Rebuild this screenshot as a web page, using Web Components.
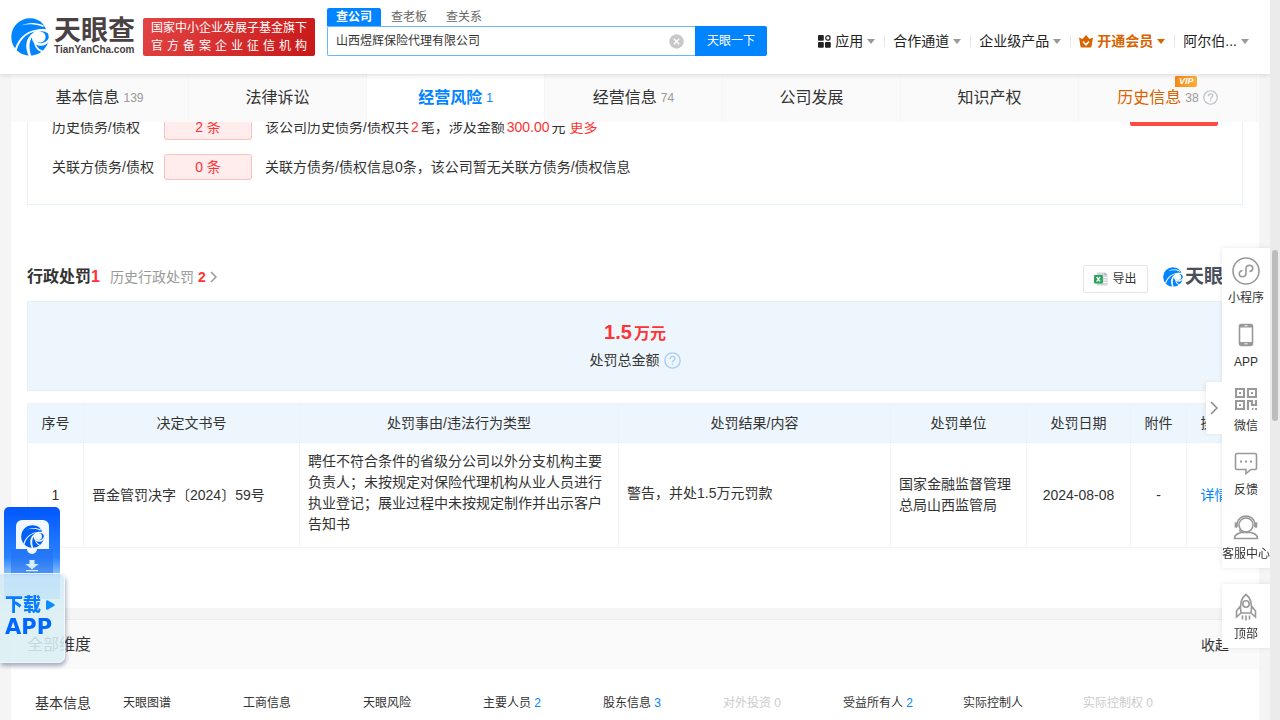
<!DOCTYPE html>
<html lang="zh-CN">
<head>
<meta charset="utf-8">
<title>山西煜辉保险代理有限公司 - 天眼查</title>
<style>
  * { box-sizing: border-box; }
  body {
    margin: 0;
    height: 100vh;
    overflow: hidden;
    padding-right: 10px;
    display: flex;
    flex-direction: column;
    background: #f5f5f5;
    color: #333;
    font-family: "Liberation Sans", "Noto Sans CJK SC", sans-serif;
    font-size: 14px;
    line-height: 20px;
  }
  main { flex: 1; min-height: 0; overflow: hidden; padding: 0 11px; }
  .sheet { background: #fff; padding: 0 16px 60px; }
</style>
</head>
<body>
  <site-header></site-header>
  <tab-nav>
    <tab-item count="139">基本信息</tab-item>
    <tab-item>法律诉讼</tab-item>
    <tab-item count="1" active>经营风险</tab-item>
    <tab-item count="74">经营信息</tab-item>
    <tab-item>公司发展</tab-item>
    <tab-item>知识产权</tab-item>
    <tab-item count="38" vip>历史信息</tab-item>
  </tab-nav>
  <main>
    <div class="sheet">
      <debt-panel></debt-panel>
      <penalty-section></penalty-section>
    </div>
    <dimension-list></dimension-list>
  </main>
  <download-card></download-card>
  <side-tools></side-tools>
  <page-scrollbar></page-scrollbar>

<script>
  class BrandMark extends HTMLElement {
    connectedCallback() {
      this.attachShadow({ mode: 'open' });
      this.shadowRoot.innerHTML = `
        <style>
          :host { display: block; flex: none; width: 38px; height: 38px; color: #0084ff; }
          svg { display: block; width: 100%; height: 100%; }
        </style>
        <svg viewBox="0 0 38 38" aria-hidden="true">
          <circle cx="19" cy="19" r="18.7" fill="currentColor"/>
          <g fill="var(--mark-cut, #fff)">
            <path d="M32 4.500 L38 11 L38 17 C36 13.500 31 12.500 28 14 C23 16 23 22 27 24.500 C31 26.500 36 24 38 20 L38 23 C35 28 29 29 25 26.500 C19 23 20 14 26 12 C29 10.800 33 11 35 11.500 C34 8.500 32.500 6.500 30.500 4.500 Z"/>
            <circle cx="29" cy="19" r="5.600"/>
            <path d="M18 38.500 C12.500 28 15 16 28 12 L25 16 C18 19 17 29 20.500 38.500 Z"/>
            <path d="M4 30.500 C8 19 16 12 30 11 L29 12.500 C18 13.500 10 19 5.500 32.500 Z"/>
            <path d="M10 7.500 C17 4 26 4 33 7.500 L32 9 C25 5.500 17 5.500 10 7.500 Z"/>
            <path d="M23 24.500 C24 30 27 33 31.500 34.500 L33 33 C29 32 26.500 30 25 26 Z"/>
          </g>
        </svg>
      `;
    }
  }
  customElements.define('brand-mark', BrandMark);

  class SearchBox extends HTMLElement {
    connectedCallback() {
      this.attachShadow({ mode: 'open' });
      this.shadowRoot.innerHTML = `
        <style>
          :host { display: block; width: 440px; font-size: 12px; }
          * { box-sizing: border-box; }
          .kinds { display: flex; gap: 1px; }
          .kinds button {
            height: 18px;
            padding: 0 9px;
            border: 0;
            border-radius: 2px 2px 0 0;
            background: none;
            color: #666;
            font: inherit;
            line-height: 18px;
          }
          .kinds .on { background: #0084ff; color: #fff; font-weight: bold; }
          form { display: flex; height: 30px; }
          .field {
            flex: 1;
            display: flex;
            align-items: center;
            padding: 0 11px 0 8px;
            border: 1px solid #6bb7ff;
            border-right: 0;
            border-radius: 2px 0 0 2px;
            background: #fff;
          }
          input { flex: 1; min-width: 0; border: 0; padding: 0; outline: 0; background: none; color: #333; font: inherit; }
          .clear { display: flex; padding: 0; border: 0; background: none; }
          .go {
            width: 72px;
            padding: 0;
            border: 0;
            border-radius: 0 2px 2px 0;
            background: #0084ff;
            color: #fff;
            font: inherit;
          }
        </style>
        <div class="kinds">
          <button class="on">查公司</button>
          <button>查老板</button>
          <button>查关系</button>
        </div>
        <form>
          <div class="field">
            <input type="text" aria-label="公司名称" value="山西煜辉保险代理有限公司">
            <button class="clear" type="button" aria-label="清空">
              <svg width="15" height="15" viewBox="0 0 15 15"><circle cx="7.500" cy="7.500" r="7.200" fill="#c8c8c8"/><path d="M4.800 4.800l5.400 5.400M10.200 4.800l-5.400 5.400" stroke="#fff" stroke-width="1.300"/></svg>
            </button>
          </div>
          <button class="go" type="button">天眼一下</button>
        </form>
      `;
    }
  }
  customElements.define('search-box', SearchBox);

  class NavEntry extends HTMLElement {
    connectedCallback() {
      this.attachShadow({ mode: 'open' });
      this.shadowRoot.innerHTML = `
        <style>
          :host { display: flex; align-items: center; color: #222; --caret: #999; }
          :host([gold]) { color: #d86400; font-weight: bold; --caret: #d86400; }
          :host(:not(:first-child))::before {
            content: '';
            width: 1px;
            height: 12px;
            margin: 0 8px 0 9px;
            background: #e6e6e6;
          }
          a { display: flex; align-items: center; gap: 4px; color: inherit; text-decoration: none; white-space: nowrap; }
          .caret { border: 4px solid transparent; border-top: 5px solid var(--caret); border-bottom: 0; }
        </style>
        <a href="#"><slot name="icon"></slot><span><slot></slot></span><span class="caret"></span></a>
      `;
    }
  }
  customElements.define('nav-entry', NavEntry);

  class SiteHeader extends HTMLElement {
    connectedCallback() {
      this.attachShadow({ mode: 'open' });
      this.shadowRoot.innerHTML = `
        <style>
          :host {
            flex: none;
            display: flex;
            align-items: flex-start;
            height: 74px;
            padding: 8px 21px 0 11px;
            box-sizing: border-box;
            background: #fff;
            box-shadow: 0 1px 5px rgba(0, 0, 0, .14);
            position: relative;
            z-index: 3;
          }
          .logo { display: flex; gap: 5px; margin-top: 10px; color: #4a4143; text-decoration: none; }
          .words { display: flex; flex-direction: column; width: 80px; }
          .name { font-size: 27px; line-height: 26px; font-weight: bold; white-space: nowrap; }
          .domain { font-size: 10px; line-height: 11px; font-weight: bold; }
          .banner {
            width: 172px;
            height: 38px;
            margin: 10px 12px 0 9px;
            padding: 1px 8px;
            box-sizing: border-box;
            border-radius: 2px;
            background: linear-gradient(120deg, #e34444, #c81818);
            color: #fff;
            font-size: 12px;
            line-height: 18px;
            white-space: nowrap;
          }
          .banner div { text-align-last: justify; }
          nav { display: flex; margin: 23px 0 0 auto; }
          svg { display: block; }
        </style>
        <a class="logo" href="#">
          <brand-mark></brand-mark>
          <span class="words">
            <span class="name">天眼查</span>
            <span class="domain">TianYanCha.com</span>
          </span>
        </a>
        <div class="banner">
          <div>国家中小企业发展子基金旗下</div>
          <div>官方备案企业征信机构</div>
        </div>
        <search-box></search-box>
        <nav>
          <nav-entry>
            <svg slot="icon" width="13" height="13" viewBox="0 0 13 13" fill="#222"><rect width="5.800" height="5.800" rx="1"/><rect y="7" width="5.800" height="5.800" rx="1"/><rect x="7" y="7" width="5.800" height="5.800" rx="1"/><circle cx="9.900" cy="2.900" r="2.200" fill="none" stroke="#222" stroke-width="1.200"/></svg>
            应用
          </nav-entry>
          <nav-entry>合作通道</nav-entry>
          <nav-entry>企业级产品</nav-entry>
          <nav-entry gold>
            <svg slot="icon" width="14" height="13" viewBox="0 0 14 13"><path d="M0 2.500L3.500 4 7 0l3.500 4L14 2.500 12.600 11q-.3 1.500-1.600 1.500H3Q1.700 12.500 1.400 11z" fill="#d86400"/><path d="M4 6.500l3 3.300 3-3.300" fill="none" stroke="#fff" stroke-width="1.500"/></svg>
            开通会员
          </nav-entry>
          <nav-entry>阿尔伯...</nav-entry>
        </nav>
      `;
    }
  }
  customElements.define('site-header', SiteHeader);

  class TabNav extends HTMLElement {
    connectedCallback() {
      this.attachShadow({ mode: 'open' });
      this.shadowRoot.innerHTML = `
        <style>
          :host {
            flex: none;
            display: flex;
            height: 48px;
            margin: 0 11px;
            padding-right: 2px;
            background: #fafafa;
            position: relative;
            z-index: 2;
          }
        </style>
        <slot></slot>
      `;
    }
  }
  customElements.define('tab-nav', TabNav);

  class TabItem extends HTMLElement {
    connectedCallback() {
      const count = this.getAttribute('count');
      const vip = this.hasAttribute('vip');
      this.attachShadow({ mode: 'open' });
      this.shadowRoot.innerHTML = `
        <style>
          :host { flex: 1 1 0; display: flex; border-right: 1px solid #f6f6f6; }
          a {
            flex: 1;
            display: flex;
            align-items: center;
            justify-content: center;
            gap: 4px;
            padding-bottom: 1px;
            color: #333;
            font-size: 16px;
            text-decoration: none;
          }
          .count { color: #999; font-size: 12px; }
          :host([active]) { background: #fff; }
          :host([active]) a { color: #0084ff; font-weight: bold; }
          :host([active]) .count { color: #0084ff; font-weight: normal; }
          :host([vip]) a { color: #d86400; }
          .label { position: relative; }
          .badge {
            position: absolute;
            right: -16px;
            top: -12px;
            width: 22px;
            height: 11px;
            border-radius: 1px 2px 2px 0;
            background: linear-gradient(90deg, #f58a12, #ffac3c);
            color: #fff;
            font: italic bold 9px/11px "Liberation Sans", sans-serif;
            text-align: center;
          }
        </style>
        <a href="#">
          <span class="label"><slot></slot>${vip ? '<span class="badge">VIP</span>' : ''}</span>
          ${count ? `<span class="count">${count}</span>` : ''}
          ${vip ? '<help-icon></help-icon>' : ''}
        </a>
      `;
    }
  }
  customElements.define('tab-item', TabItem);

  class HelpIcon extends HTMLElement {
    connectedCallback() {
      this.attachShadow({ mode: 'open' });
      this.shadowRoot.innerHTML = `
        <style>
          :host { display: block; width: 15px; height: 15px; color: #bcc1c8; }
          svg { display: block; width: 100%; height: 100%; }
        </style>
        <svg viewBox="0 0 16 16" fill="none" stroke="currentColor" stroke-width="1.300">
          <circle cx="8" cy="8" r="7.200"/>
          <path d="M5.700 6.600C5.600 3.400 10.400 3.300 10.400 6.200C10.400 7.800 8 7.900 8 9.800M8 11v1.300"/>
        </svg>
      `;
    }
  }
  customElements.define('help-icon', HelpIcon);

  class DebtPanel extends HTMLElement {
    connectedCallback() {
      this.attachShadow({ mode: 'open' });
      // the first row starts above the fold, under the sticky tabs
      this.shadowRoot.innerHTML = `
        <style>
          :host {
            display: flex;
            justify-content: space-between;
            margin-top: -15px;
            padding: 0 24px 17px;
            border: 1px solid #e9f1f8;
            border-top: 0;
          }
          .row { display: grid; grid-template-columns: 112px 88px auto; align-items: center; height: 40px; }
          .num { justify-self: stretch; height: 26px; box-sizing: border-box; border: 1px solid #fcbfc2; border-radius: 3px; background: #ffecec; color: #f33; line-height: 24px; text-align: center; }
          .text { padding-left: 13px; }
          em { margin: 0 2px; color: #f33; font-style: normal; }
          a { color: #f33; text-decoration: none; }
          .mark { width: 88px; height: 19px; border-radius: 2px; background: #ff4a42; }
        </style>
        <div>
          <div class="row">
            <span>历史债务/债权</span><span class="num">2 条</span>
            <span class="text">该公司历史债务/债权共<em>2</em>笔，涉及金额<em>300.00</em>元 <a href="#">更多</a></span>
          </div>
          <div class="row">
            <span>关联方债务/债权</span><span class="num">0 条</span>
            <span class="text">关联方债务/债权信息0条，该公司暂无关联方债务/债权信息</span>
          </div>
        </div>
        <div class="mark"></div>
      `;
    }
  }
  customElements.define('debt-panel', DebtPanel);

  class PenaltySection extends HTMLElement {
    connectedCallback() {
      this.attachShadow({ mode: 'open' });
      this.shadowRoot.innerHTML = `
        <style>
          :host { display: block; padding-top: 55px; }
          * { box-sizing: border-box; }
          header { display: flex; align-items: center; height: 33px; margin-bottom: 8px; }
          h2 { margin: 0 10px 0 0; font-size: 16px; }
          h2 span, .past b { color: #f33; }
          .past { display: flex; align-items: center; gap: 4px; color: #999; text-decoration: none; }
          .export {
            display: flex;
            align-items: center;
            align-self: flex-end;
            justify-content: center;
            gap: 4px;
            width: 65px;
            height: 28px;
            margin: 0 15px 0 auto;
            padding: 0;
            border: 1px solid #e6e6e6;
            border-radius: 2px;
            background: #fff;
            color: #333;
            font: inherit;
            font-size: 12px;
          }
          .brand { display: flex; align-items: center; gap: 2px; width: 80px; color: #4a4f5c; font-size: 19px; font-weight: bold; white-space: nowrap; }
          .brand brand-mark { width: 20px; height: 20px; }
          .sum { height: 90px; margin-bottom: 12px; padding-top: 20px; border: 1px solid #e4eff8; background: #eef6fd; text-align: center; }
          .amount { color: #f33; font-size: 16px; font-weight: bold; }
          .amount b { font-size: 20px; margin-right: 2px; }
          .caption { display: flex; align-items: center; justify-content: center; gap: 4px; margin-top: 6px; }
          .caption help-icon { width: 17px; height: 17px; color: #a9cdf0; }
          table { width: 100%; table-layout: fixed; border-collapse: collapse; }
          th, td { padding: 8px; border: 1px solid #eef5fb; text-align: left; line-height: 21px; }
          th { height: 39px; padding: 0; background: #eef6fd; border-color: #e9f3fb; font-weight: normal; text-align: center; }
          td.mid { text-align: center; }
          td.rich { padding-bottom: 12px; }
          td a { color: #0084ff; text-decoration: none; }
        </style>
        <header>
          <h2>行政处罚<span>1</span></h2>
          <a class="past" href="#">历史行政处罚 <b>2</b>
            <svg width="7" height="12" viewBox="0 0 7 12" fill="none" stroke="#999" stroke-width="1.500"><path d="M1 1l5 5-5 5"/></svg>
          </a>
          <button class="export">
            <svg width="14" height="14" viewBox="0 0 14 14"><path d="M3 .5h7.500L13.500 3v10.500H3z" fill="#d2d6da"/><path d="M10.500.5V3h3z" fill="#a9afb5"/><path d="M9.500 5.500h3M9.500 8h3M9.500 10.500h3" stroke="#fff"/><rect y="3" width="8.800" height="8.500" rx="1" fill="#21a556"/><path d="M2.700 5l3.400 4.500M6.100 5L2.700 9.500" stroke="#fff" stroke-width="1.300"/></svg>
            导出
          </button>
          <div class="brand"><brand-mark></brand-mark>天眼查</div>
        </header>
        <div class="sum">
          <div class="amount"><b>1.5</b>万元</div>
          <div class="caption">处罚总金额<help-icon></help-icon></div>
        </div>
        <table>
          <colgroup>
            <col style="width: 56px"><col style="width: 216px"><col style="width: 319px"><col>
            <col style="width: 136px"><col style="width: 104px"><col style="width: 56px"><col style="width: 56px">
          </colgroup>
          <thead>
            <tr><th>序号</th><th>决定文书号</th><th>处罚事由/违法行为类型</th><th>处罚结果/内容</th><th>处罚单位</th><th>处罚日期</th><th>附件</th><th>操作</th></tr>
          </thead>
          <tbody>
            <tr>
              <td class="mid">1</td>
              <td>晋金管罚决字〔2024〕59号</td>
              <td class="rich">聘任不符合条件的省级分公司以外分支机构主要负责人；未按规定对保险代理机构从业人员进行执业登记；展业过程中未按规定制作并出示客户告知书</td>
              <td class="rich">警告，并处1.5万元罚款</td>
              <td>国家金融监督管理总局山西监管局</td>
              <td class="mid">2024-08-08</td>
              <td class="mid">-</td>
              <td class="mid"><a href="#">详情</a></td>
            </tr>
          </tbody>
        </table>
      `;
    }
  }
  customElements.define('penalty-section', PenaltySection);

  class DimensionList extends HTMLElement {
    connectedCallback() {
      const items = [['天眼图谱'], ['工商信息'], ['天眼风险'], ['主要人员', 2], ['股东信息', 3], ['对外投资', 0], ['受益所有人', 2], ['实际控制人'], ['实际控制权', 0]];
      this.attachShadow({ mode: 'open' });
      this.shadowRoot.innerHTML = `
        <style>
          :host { display: block; margin-top: 11px; border-top: 1px solid #ececec; background: #fff; }
          .head { display: flex; justify-content: space-between; align-items: center; height: 49px; padding: 0 30px 0 16px; background: #fafafa; font-size: 16px; }
          .head button { padding: 0; border: 0; background: none; color: inherit; font: inherit; font-size: 14px; }
          .list { display: grid; grid-template-columns: 88px repeat(auto-fill, 120px); align-items: center; padding: 24px 24px; font-size: 12px; }
          .list span { font-size: 14px; }
          .list a { color: #333; text-decoration: none; }
          .list b { color: #0084ff; font-weight: normal; }
          .list .none, .list .none b { color: #ccc; }
        </style>
        <div class="head"><span>全部维度</span><button>收起</button></div>
        <div class="list">
          <span>基本信息</span>
          ${items.map(([name, n]) => `<a href="#" class="${n === 0 ? 'none' : ''}">${name}${n === undefined ? '' : ` <b>${n}</b>`}</a>`).join('')}
        </div>
      `;
    }
  }
  customElements.define('dimension-list', DimensionList);

  class DownloadCard extends HTMLElement {
    connectedCallback() {
      this.attachShadow({ mode: 'open' });
      this.shadowRoot.innerHTML = `
        <style>
          :host { position: fixed; left: 0; bottom: 57px; z-index: 4; width: 65px; }
          .phone {
            display: flex;
            flex-direction: column;
            align-items: center;
            box-sizing: border-box;
            width: 56px;
            height: 92px;
            margin: 0 0 -26px 4px;
            padding-top: 13px;
            border-radius: 5px 5px 0 0;
            background: linear-gradient(#0057ff, #2b83ff 55%, #a5d3ff 78%, #8cc8fb);
          }
          .phone svg { display: block; }
          .app { flex: none; box-sizing: border-box; width: 33px; height: 29px; padding: 5px; border-radius: 6px 6px 0 0; background: #f1f8ff; --mark-cut: #f1f8ff; }
          .app brand-mark { width: 23px; height: 23px; color: #0060f5; }
          .card {
            position: relative;
            box-sizing: border-box;
            height: 90px;
            padding: 20px 0 0 5px;
            border: 1px solid rgba(255, 255, 255, .6);
            border-left: 0;
            border-radius: 0 6px 7px 0;
            background: linear-gradient(rgba(203, 230, 247, .76), rgba(218, 239, 244, .88) 45%);
            box-shadow: 1px 3px 4px rgba(60, 80, 120, .45);
            color: #0a7cff;
            font-weight: 900;
          }
          a { color: inherit; text-decoration: none; }
          .line { display: flex; align-items: center; gap: 5px; font-size: 18px; line-height: 22px; }
          .big { font: bold 21px/23px "DejaVu Sans", sans-serif; color: #0068ff; }
        </style>
        <div class="phone">
          <div class="app"><brand-mark></brand-mark></div>
          <svg width="42" height="26" viewBox="0 0 42 26">
            <path d="M0 0h16a5 5 0 0 0 10 0h16v26H0z" fill="#2170ef" fill-opacity=".55"/>
            <path d="M16 0a5 5 0 0 0 10 0z" fill="#f1f8ff"/>
            <path d="M18.500 11h5v4h4L21 20.500 14.500 15h4zM15 21h12v1.200H15z" fill="#d9ecff"/>
          </svg>
        </div>
        <div class="card">
          <a href="#">
            <div class="line">下载<svg width="9" height="10" viewBox="0 0 9 10"><path d="M0 1.500Q0-.5 2 .5L8 4q1.500 1 0 2L2 9.500Q0 10.500 0 8.500z" fill="#0a8cff"/></svg></div>
            <div class="big">APP</div>
          </a>
        </div>
      `;
    }
  }
  customElements.define('download-card', DownloadCard);

  const toolIcons = {
    mini: '<circle cx="14" cy="14" r="13"/><path d="M10.500 13.500c-4 .5-4.500 6-.5 6.300 2.500 0 4-1.400 4-3.300V11.500c0-2 1.500-3.300 4-3.300 4 .4 3.500 5.800-.5 6.300"/>',
    phone: '<rect x="7.500" y="3.500" width="13" height="21" rx="2"/><path d="M7.500 5h13M7.500 22.500h13" stroke-width="3"/><path d="M12.500 22.800h3M12.500 4.800h3" stroke="#fff" stroke-width="1"/>',
    qr: '<path d="M4 4h8v8H4zM16 4h8v8h-8zM4 16h8v8H4z" stroke-width="2"/><path d="M7 7h2v2H7zM19 7h2v2h-2zM7 19h2v2H7z" fill="#999" stroke="none"/><path d="M16 25v-9h4v4h4v-5M20 24h1.500M23 24h2" stroke-width="2.200"/>',
    chat: '<path d="M5 4.500h18a1.500 1.500 0 0 1 1.500 1.500v13a1.500 1.500 0 0 1-1.500 1.500h-4l-5 4v-4H5A1.500 1.500 0 0 1 3.500 19V6A1.500 1.500 0 0 1 5 4.500z"/><path d="M8 12.500h2M13 12.500h2M18 12.500h2" stroke-width="2"/>',
    service: '<circle cx="14" cy="12" r="7"/><path d="M5 14V11C6 .5 22 .5 23 11v3M4 9.500v5M24 9.500v5M7 17l3 2.500M2.500 25.500c0-4 3-5 6.500-6h10c3.500 1 6.500 2 6.500 6z"/><path d="M4 9.500v5M24 9.500v5" stroke-width="2.600"/>',
    rocket: '<path d="M9 20C7.500 11 9 5 14 1.500 19 5 20.500 11 19 20zM8.500 13L4.500 18v6l4.500-4M19.500 13l4 5v6L19 20M10.500 22.500v4M14 22.500v5M17.500 22.500v4"/><circle cx="14" cy="11" r="3.200"/>'
  };

  class ToolItem extends HTMLElement {
    connectedCallback() {
      this.attachShadow({ mode: 'open' });
      this.shadowRoot.innerHTML = `
        <style>
          :host { display: block; height: 64px; background: #fff; }
          a { display: flex; flex-direction: column; align-items: center; gap: 4px; padding-top: 9px; color: #333; font-size: 12px; line-height: 18px; text-decoration: none; white-space: nowrap; }
        </style>
        <a href="#">
          <svg width="28" height="28" viewBox="0 0 28 28" fill="none" stroke="#999" stroke-width="1.600">${toolIcons[this.getAttribute('icon')]}</svg>
          <slot></slot>
        </a>
      `;
    }
  }
  customElements.define('tool-item', ToolItem);

  class SideTools extends HTMLElement {
    connectedCallback() {
      this.attachShadow({ mode: 'open' });
      this.shadowRoot.innerHTML = `
        <style>
          :host { position: fixed; right: 10px; bottom: 72px; z-index: 4; width: 48px; }
          .group { background: #fff; box-shadow: 0 0 5px rgba(0, 0, 0, .1); }
          .group + .group { margin-top: 16px; }
          .fold {
            position: absolute;
            right: 100%;
            top: 134px;
            display: flex;
            align-items: center;
            justify-content: center;
            width: 16px;
            height: 52px;
            padding: 0;
            border: 0;
            border-radius: 2px 0 0 2px;
            background: #fff;
            box-shadow: -2px 0 4px rgba(0, 0, 0, .06);
          }
        </style>
        <div class="group">
          <tool-item icon="mini">小程序</tool-item>
          <tool-item icon="phone">APP</tool-item>
          <tool-item icon="qr">微信</tool-item>
          <tool-item icon="chat">反馈</tool-item>
          <tool-item icon="service">客服中心</tool-item>
        </div>
        <div class="group">
          <tool-item icon="rocket">顶部</tool-item>
        </div>
        <button class="fold" aria-label="收起工具栏">
          <svg width="8" height="14" viewBox="0 0 8 14" fill="none" stroke="#888" stroke-width="1.500"><path d="M1 1l6 6-6 6"/></svg>
        </button>
      `;
    }
  }
  customElements.define('side-tools', SideTools);

  class PageScrollbar extends HTMLElement {
    connectedCallback() {
      this.attachShadow({ mode: 'open' });
      this.shadowRoot.innerHTML = `
        <style>
          :host { position: fixed; top: 0; right: 0; bottom: 0; z-index: 5; width: 10px; background: #ebebeb; }
          .thumb { height: 171px; margin: 250px 2px 0; border-radius: 3px; background: #bcbcbc; }
        </style>
        <div class="thumb"></div>
      `;
    }
  }
  customElements.define('page-scrollbar', PageScrollbar);
</script>
</body>
</html>
